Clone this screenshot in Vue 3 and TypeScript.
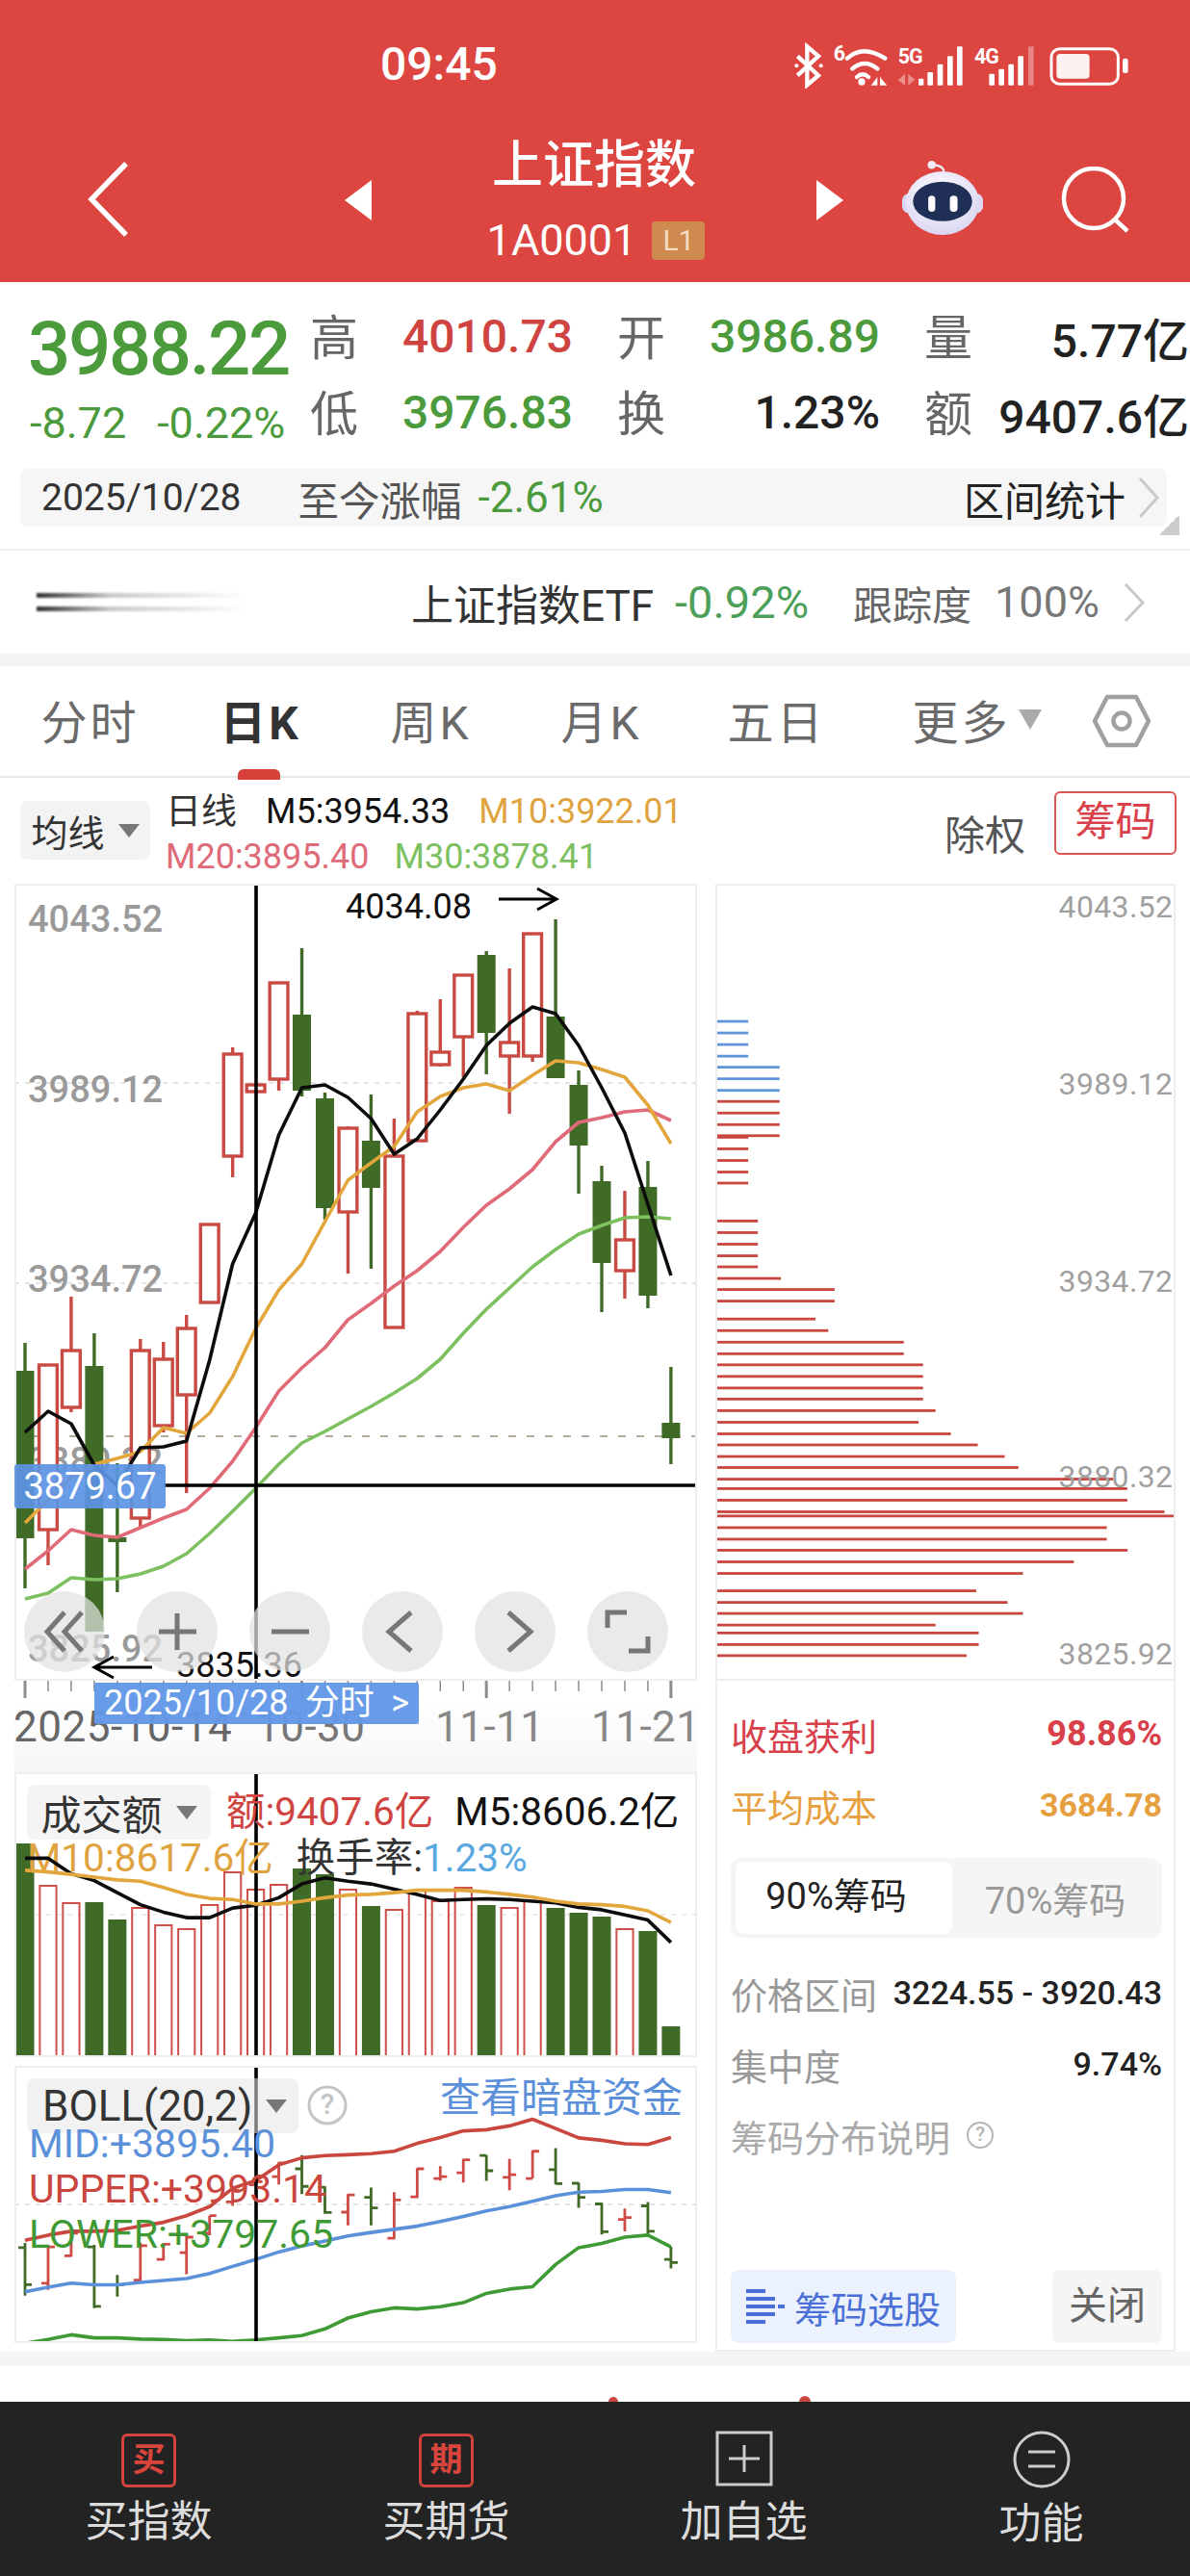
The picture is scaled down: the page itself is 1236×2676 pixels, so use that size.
<script setup lang="ts">
const X = (i: number): number => 26 + i * 23.96;
const z3 = (v: number): number => 1500 + v / 2.8;
const z4 = (v: number): number => 2040 + v / 2.465;
const line = (ys: number[]): string => ys.map((y, i) => `${X(i).toFixed(1)},${y.toFixed(1)}`).join(' ');

type Candle = [string, number, number, number, number];
const rawCandles: Candle[] = [
  ['g', 1395, 1424, 1598, 1650], ['r', 1418, 1418, 1589, 1626], ['r', 1347, 1403, 1462, 1467],
  ['g', 1385, 1419, 1695, 1695], ['g', 1520, 1597, 1602, 1654], ['r', 1391, 1403, 1577, 1587],
  ['r', 1394, 1412, 1481, 1488], ['r', 1366, 1380, 1449, 1551], ['r', 1272, 1272, 1353, 1353],
  ['r', 1088, 1095, 1201, 1223], ['r', 1127, 1127, 1134, 1134], ['r', 1021, 1021, 1121, 1133],
  ['g', 985, 1054, 1133, 1139], ['g', 1135, 1141, 1255, 1267], ['r', 1170, 1172, 1259, 1323],
  ['g', 1137, 1185, 1234, 1318], ['r', 1162, 1201, 1379, 1379], ['r', 1050, 1053, 1185, 1185],
  ['r', 1038, 1093, 1106, 1108], ['r', 1013, 1013, 1077, 1119], ['g', 988, 992, 1073, 1116],
  ['r', 1006, 1083, 1097, 1157], ['r', 969, 970, 1097, 1103], ['g', 955, 1056, 1120, 1120],
  ['g', 1112, 1127, 1190, 1240], ['g', 1211, 1227, 1312, 1363], ['r', 1237, 1288, 1320, 1349],
  ['g', 1206, 1233, 1346, 1359], ['g', 1420, 1478, 1494, 1521],
];
const candles = rawCandles.map((c, i) => ({
  up: c[0] === 'r', x: X(i), wt: c[1], bt: c[2], bb: c[3], wb: c[4],
}));

const m5 = line([1488, 1466, 1479, 1522, 1543, 1504, 1503, 1497, 1413, 1313, 1260, 1179, 1130, 1127, 1140, 1162, 1199, 1183, 1153, 1121, 1086, 1063, 1046, 1053, 1086, 1130, 1177, 1251, 1325]);
const m10 = line([1582, 1558, 1535, 1521, 1515, 1508, 1483, 1489, 1468, 1430, 1380, 1340, 1313, 1269, 1226, 1208, 1191, 1155, 1139, 1130, 1126, 1133, 1117, 1102, 1104, 1111, 1119, 1148, 1188]);
const m20 = line([1630, 1611, 1589, 1595, 1597, 1587, 1577, 1568, 1546, 1518, 1483, 1445, 1421, 1400, 1371, 1354, 1336, 1320, 1300, 1275, 1252, 1235, 1215, 1186, 1166, 1161, 1155, 1153, 1164]);
const m30 = line([1661, 1655, 1639, 1641, 1640, 1635, 1627, 1614, 1593, 1570, 1546, 1521, 1499, 1487, 1474, 1461, 1447, 1432, 1412, 1385, 1360, 1338, 1316, 1298, 1282, 1273, 1265, 1264, 1266]);

const volTops = [1915, 1959, 1977, 1976, 1994, 1982, 2000, 2004, 1979, 1945, 1963, 1958, 1941, 1947, 1963, 1980, 1984, 1964, 1975, 1961, 1979, 1982, 1975, 1982, 1987, 1991, 2004, 2006, 2105];
const volUp = [0, 1, 1, 0, 0, 1, 1, 1, 1, 1, 1, 1, 0, 0, 1, 0, 1, 1, 1, 1, 0, 1, 1, 0, 0, 0, 1, 0, 0];
const vols = volTops.map((t, i) => ({ x: X(i), top: t, up: volUp[i] === 1 }));
const vm5 = line([1205, 1205, 1250, 1270, 1305, 1340, 1362, 1378, 1378, 1350, 1342, 1320, 1280, 1262, 1272, 1280, 1295, 1310, 1328, 1325, 1323, 1325, 1330, 1335, 1348, 1355, 1370, 1385, 1450].map(z3));
const vm10 = line([1240, 1245, 1252, 1260, 1268, 1272, 1290, 1310, 1322, 1325, 1338, 1338, 1330, 1320, 1312, 1310, 1305, 1298, 1298, 1298, 1303, 1310, 1318, 1330, 1338, 1340, 1345, 1358, 1392].map(z3));

const bUpper = line([708, 695, 685, 685, 683, 672, 662, 645, 622, 575, 555, 515, 497, 491, 489, 486, 480, 460, 445, 428, 425, 415, 398, 422, 446, 452, 461, 463, 445].map(z4));
const bMid = line([840, 828, 818, 822, 822, 816, 811, 806, 793, 775, 757, 738, 723, 710, 697, 688, 680, 672, 660, 647, 633, 622, 608, 594, 585, 583, 578, 578, 586].map(z4));
const bLower = line([972, 962, 950, 958, 958, 961, 962, 965, 963, 967, 963, 958, 952, 935, 907, 891, 881, 884, 878, 868, 844, 833, 827, 770, 727, 716, 700, 695, 725].map(z4));

type Ohlc = [number, number, number, number, number];
const rawBars: Ohlc[] = [
  [0, 715, 850, 727, 822], [1, 725, 835, 818, 725], [1, 685, 750, 748, 690], [0, 720, 882, 725, 877],
  [0, 797, 852, 822, 822], [1, 715, 812, 810, 722], [1, 715, 760, 757, 718], [1, 695, 795, 740, 700],
  [1, 645, 695, 690, 645], [1, 578, 620, 610, 580], [1, 556, 568, 566, 558], [1, 508, 565, 545, 510],
  [0, 490, 590, 525, 570], [0, 570, 640, 572, 637], [1, 590, 670, 636, 592], [0, 573, 670, 598, 625],
  [1, 585, 705, 703, 605], [1, 523, 600, 597, 525], [1, 518, 555, 550, 545], [1, 500, 560, 535, 502],
  [0, 490, 556, 491, 530], [1, 500, 580, 547, 540], [1, 478, 550, 550, 480], [0, 472, 565, 527, 563],
  [0, 560, 625, 562, 598], [0, 612, 693, 615, 686], [1, 627, 685, 655, 650], [0, 610, 695, 620, 685],
  [0, 725, 780, 757, 765],
];
const bars = rawBars.map((b, i) => {
  const x = X(i);
  const hi = z4(b[1]), lo = z4(b[2]), op = z4(b[3]), cl = z4(b[4]);
  return {
    up: b[0] === 1,
    d: `M${x} ${hi}V${lo}M${x - 7} ${op}H${x}M${x} ${cl}H${x + 7}`,
  };
});

const chipRaw: [number, number, number][] = [
  [294, 140, 0], [316, 140, 0], [338, 140, 0], [360, 140, 0], [381, 238, 0], [403, 238, 0], [425, 238, 0],
  [446, 238, 1], [468, 238, 1], [490, 238, 1], [511, 238, 1], [514, 140, 1], [536, 140, 1], [558, 140, 1], [580, 140, 1], [601, 140, 1],
  [673, 170, 1], [695, 170, 1], [717, 170, 1], [739, 170, 1], [760, 170, 1], [782, 242, 1], [803, 410, 1], [825, 410, 1],
  [859, 350, 1], [881, 390, 1], [903, 626, 1], [925, 626, 1], [946, 686, 1], [968, 686, 1], [990, 686, 1], [1011, 686, 1],
  [1033, 725, 1], [1055, 672, 1], [1077, 773, 1], [1098, 857, 1], [1120, 941, 1], [1141, 984, 1], [1163, 1280, 1], [1181, 1324, 1],
  [1203, 1324, 1], [1225, 1440, 1], [1233, 1472, 1], [1255, 1260, 1], [1277, 1260, 1], [1298, 1325, 1], [1320, 1157, 1], [1342, 998, 1],
  [1375, 852, 1], [1397, 950, 1], [1418, 998, 1], [1440, 725, 1], [1455, 860, 1], [1477, 860, 1], [1498, 822, 1],
];
const chips = chipRaw.map((c) => ({
  y: 900 + c[0] / 1.823 - 1.3,
  w: 730 + c[1] / 3 - 744,
  up: c[2] === 1,
}));

const tickXs = Array.from({ length: 29 }, (_, i) => ({ x: X(i), long: i === 0 || i === 12 || i === 20 || i === 28 }));
const chipPrices = [
  { t: '4043.52', y: 953 }, { t: '3989.12', y: 1138 }, { t: '3934.72', y: 1343 }, { t: '3880.32', y: 1547 }, { t: '3825.92', y: 1731 },
];
const navItems = [
  'M42 22 24 42l18 20M60 22 42 42l18 20',
  'M42 23v38M23 42h39',
  'M23 42h39',
  'M51 22 28 42l23 20',
  'M35 22l23 20-23 20',
  'M21 38V22H41M43 62H63V47',
];
const tabs = ['周K', '月K', '五日'];
</script>

<template>
  <div class="page">
    <header class="head">
      <div class="status">
        <span class="time">09:45</span>
        <svg class="status-icons" viewBox="60 42 1065 144" width="355" height="48">
          <path d="M85 85l65 60-35 30V55l35 30-65 60" fill="none" stroke="#fff" stroke-width="13" />
          <circle cx="82" cy="115" r="6" fill="#fff" /><circle cx="158" cy="115" r="6" fill="#fff" />
          <text x="197" y="100" class="st-t">6</text>
          <path d="M240 92q48-44 118 0M256 124q38-32 78 0M270 150q18-16 36 0" fill="none" stroke="#fff" stroke-width="13" stroke-linecap="round" />
          <circle cx="285" cy="165" r="11" fill="#fff" />
          <path d="M334 150v26h-20zM342 150v26h22z" fill="#fff" />
          <text x="398" y="108" class="st-t">5G</text>
          <path d="M398 160l22-20v36zM430 140l20 18-20 18z" fill="#fff" opacity=".4" />
          <g fill="#fff">
            <rect x="462" y="155" width="16" height="21" rx="3" /><rect x="490" y="135" width="17" height="41" rx="3" />
            <rect x="521" y="110" width="17" height="66" rx="3" /><rect x="552" y="85" width="17" height="91" rx="3" />
            <rect x="582" y="55" width="17" height="121" rx="3" />
          </g>
          <text x="636" y="108" class="st-t">4G</text>
          <g fill="#fff">
            <rect x="682" y="140" width="17" height="36" rx="3" /><rect x="712" y="125" width="17" height="51" rx="3" />
            <rect x="742" y="110" width="17" height="66" rx="3" /><rect x="772" y="85" width="17" height="91" rx="3" />
            <rect x="804" y="55" width="17" height="121" rx="3" opacity=".35" />
          </g>
          <rect x="876" y="62" width="208" height="110" rx="26" fill="none" stroke="#fff" stroke-width="9" />
          <rect x="892" y="78" width="103" height="77" rx="12" fill="#fff" opacity=".93" />
          <rect x="1098" y="92" width="17" height="46" rx="7" fill="#fff" />
        </svg>
      </div>
      <div class="nav">
        <svg class="back" width="44" height="80" viewBox="0 0 44 80"><path d="M41 3 5 40l36 37" fill="none" stroke="#fff" stroke-width="5.5" /></svg>
        <svg class="tri-l" width="28" height="42" viewBox="0 0 28 42"><path d="M28 0v42L0 21z" fill="#fff" /></svg>
        <div class="title">
          <div class="name">上证指数</div>
          <div class="code">1A0001<span class="lv">L1</span></div>
        </div>
        <svg class="tri-r" width="28" height="42" viewBox="0 0 28 42"><path d="M0 0v42l28-21z" fill="#fff" /></svg>
        <svg class="robot" width="86" height="80" viewBox="405 402 260 240">
          <defs>
            <radialGradient id="rb" cx="45%" cy="35%" r="75%"><stop offset="0" stop-color="#fff" /><stop offset="1" stop-color="#d6d0f0" /></radialGradient>
          </defs>
          <path d="M540 440q-4-18-36-20" fill="none" stroke="#f1edf8" stroke-width="7" />
          <circle cx="501" cy="420" r="13" fill="#f1edf8" />
          <rect x="408" y="510" width="254" height="62" rx="22" fill="#dcd7f2" />
          <ellipse cx="535" cy="540" rx="115" ry="100" fill="url(#rb)" />
          <ellipse cx="535" cy="535" rx="93" ry="62" fill="#1f2f55" />
          <rect x="490" y="517" width="22" height="50" rx="11" fill="#fff" />
          <rect x="558" y="517" width="24" height="50" rx="11" fill="#fff" />
        </svg>
        <svg class="search" width="72" height="70" viewBox="0 0 72 70"><circle cx="34" cy="33" r="31" fill="none" stroke="#fff" stroke-width="4.5" /><path d="M56 55l13 12" stroke="#fff" stroke-width="4.5" /></svg>
      </div>
    </header>

    <section class="quote">
      <div class="price-col">
        <div class="big">3988.22</div>
        <div class="delta"><span>-8.72</span><span>-0.22%</span></div>
      </div>
      <div class="stats">
        <div class="stat"><span class="lb">高</span><span class="v red">4010.73</span></div>
        <div class="stat"><span class="lb">开</span><span class="v green">3986.89</span></div>
        <div class="stat"><span class="lb">量</span><span class="v dark">5.77亿</span></div>
        <div class="stat"><span class="lb">低</span><span class="v green">3976.83</span></div>
        <div class="stat"><span class="lb">换</span><span class="v dark">1.23%</span></div>
        <div class="stat"><span class="lb">额</span><span class="v dark">9407.6亿</span></div>
      </div>
    </section>

    <div class="range">
      <span class="r-date">2025/10/28</span>
      <span class="r-lab">至今涨幅</span>
      <span class="r-val">-2.61%</span>
      <span class="r-stat">区间统计</span>
      <svg width="24" height="46" viewBox="0 0 24 46"><path d="M3 3l18 20L3 43" fill="none" stroke="#c9c9c9" stroke-width="3" /></svg>
      <i class="corner"></i>
    </div>

    <div class="etf">
      <div class="blurred"><i></i><i></i></div>
      <span class="e-name">上证指数ETF</span>
      <span class="e-val">-0.92%</span>
      <span class="e-lab">跟踪度</span>
      <span class="e-num">100%</span>
      <svg width="24" height="44" viewBox="0 0 24 44"><path d="M3 3l18 19L3 41" fill="none" stroke="#c9c9c9" stroke-width="3" /></svg>
    </div>

    <nav class="tabs">
      <span class="tab">分时</span>
      <span class="tab active">日K</span>
      <span v-for="t in tabs" :key="t" class="tab">{{ t }}</span>
      <span class="tab more">更多<i class="big-tri"></i></span>
      <svg class="hex" width="60" height="56" viewBox="0 0 60 56"><path d="M15 3h30l13 25-13 25H15L2 28z" fill="none" stroke="#a0a0a0" stroke-width="4.5" stroke-linejoin="round" /><circle cx="30" cy="28" r="8.5" fill="none" stroke="#a0a0a0" stroke-width="4.5" /></svg>
    </nav>

    <div class="legend">
      <div class="pill ma">均线<i class="tri-down"></i></div>
      <div class="legend-rows">
        <div class="l-row"><span class="l-dark">日线</span><span class="l-blk">M5:3954.33</span><span class="l-org">M10:3922.01</span></div>
        <div class="l-row"><span class="l-pink">M20:3895.40</span><span class="l-grn">M30:3878.41</span></div>
      </div>
      <span class="rights">除权</span>
      <span class="chip-btn">筹码</span>
    </div>

    <div class="charts">
      <div class="left-col">
        <div class="panel main">
          <svg class="fill" viewBox="15 918 709 828">
            <g stroke-width="1.5" stroke-dasharray="5 6" fill="none">
              <path d="M15 1125H724M15 1333H724" stroke="#dcdcdc" />
              <path d="M15 1492H724" stroke="#b5ae9f" stroke-width="2" stroke-dasharray="8 11" />
            </g>
            <text class="y-l" x="29" y="968">4043.52</text>
            <text class="y-l" x="29" y="1145">3989.12</text>
            <text class="y-l" x="29" y="1342">3934.72</text>
            <text class="y-l" x="29" y="1531">3880.32</text>
            <g v-for="(c, i) in candles" :key="i">
              <template v-if="c.up">
                <path :d="`M${c.x} ${c.wt}V${c.bt}M${c.x} ${c.bb}V${c.wb}`" stroke="#c94a42" stroke-width="3.4" />
                <rect :x="c.x - 9.4" :y="c.bt" width="18.8" :height="c.bb - c.bt" fill="#fff" stroke="#c94a42" stroke-width="3.4" />
              </template>
              <template v-else>
                <path :d="`M${c.x} ${c.wt}V${c.wb}`" stroke="#3f6b26" stroke-width="3.4" />
                <rect :x="c.x - 9.5" :y="c.bt" width="19" :height="c.bb - c.bt" fill="#3f6b26" />
              </template>
            </g>
            <polyline :points="m30" class="ln" stroke="#7cc05f" />
            <polyline :points="m20" class="ln" stroke="#e06a78" />
            <polyline :points="m10" class="ln" stroke="#e3a63d" />
            <polyline :points="m5" class="ln" stroke="#0c0c0c" />
            <path d="M266 918V1746M170 1543H724" stroke="#000" stroke-width="3.6" />
            <text class="mark" x="359" y="954">4034.08</text>
            <path d="M518 934H577M558 923l20 11-20 11" fill="none" stroke="#000" stroke-width="3" />
            <text class="y-l" x="29" y="1726">3825.92</text>
            <text class="mark" x="183" y="1742">3835.36</text>
            <path d="M158 1732H99M118 1721l-20 11 20 11" fill="none" stroke="#000" stroke-width="3" />
          </svg>
          <div class="now-tag">3879.67</div>
          <div class="nav-btns">
            <span v-for="(d, i) in navItems" :key="i" class="nav-btn">
              <svg width="84" height="84" viewBox="0 0 84 84"><path :d="d" fill="none" stroke="#777" stroke-width="5" /></svg>
            </span>
          </div>
        </div>

        <div class="axis">
          <svg class="ticks" width="709" height="22" viewBox="15 1748 709 22">
            <path v-for="t in tickXs" :key="t.x" :d="`M${t.x} 1748v${t.long ? 18 : 11}`" stroke="#8d8d8d" :stroke-width="t.long ? 3 : 1.5" />
          </svg>
          <div class="date-labels">
            <span class="d1">2025-10-14</span><span class="d2">10-30</span><span class="d3">11-11</span><span class="d4">11-21</span>
          </div>
          <div class="date-tag"><span>2025/10/28</span><span>分时</span><span>&gt;</span></div>
        </div>

        <div class="panel vol">
          <svg class="fill" viewBox="15 1841 709 296">
            <path d="M15 1989H724" stroke="#e8e8e8" stroke-width="1.5" stroke-dasharray="5 6" />
            <g v-for="(b, i) in vols" :key="i">
              <rect v-if="b.up" :x="b.x - 8.6" :y="b.top" width="17.2" :height="2136 - b.top" fill="none" stroke="#cf4f4a" stroke-width="2" />
              <rect v-else :x="b.x - 9.5" :y="b.top" width="19" :height="2137 - b.top" fill="#3f6b26" />
            </g>
            <path d="M266 1841V2137" stroke="#000" stroke-width="3.6" />
          </svg>
          <div class="pill amount">成交额<i class="tri-down"></i></div>
          <div class="vol-l1"><span class="c-red">额:9407.6亿</span><span class="c-blk">M5:8606.2亿</span></div>
          <div class="vol-l2"><span class="c-org">M10:8617.6亿</span><span class="c-dk">换手率:<em>1.23%</em></span></div>
          <svg class="fill over" viewBox="15 1841 709 296">
            <polyline :points="vm5" class="ln" stroke="#0c0c0c" />
            <polyline :points="vm10" class="ln" stroke="#e3a63d" />
          </svg>
        </div>

        <div class="panel boll">
          <svg class="fill" viewBox="15 2146 709 288">
            <path d="M15 2290H724" stroke="#dcdcdc" stroke-width="1.5" stroke-dasharray="5 6" />
            <path v-for="(b, i) in bars" :key="i" :d="b.d" fill="none" :stroke="b.up ? '#cf4a45' : '#3f6b26'" stroke-width="2.8" />
            <polyline :points="bUpper" class="ln" stroke="#c9473f" />
            <polyline :points="bMid" class="ln" stroke="#5b90da" />
            <polyline :points="bLower" class="ln" stroke="#3f9a35" />
            <path d="M266 2146V2434" stroke="#000" stroke-width="3.6" />
          </svg>
          <div class="pill boll-p">BOLL(20,2)<i class="tri-down"></i></div>
          <svg class="q" width="44" height="44" viewBox="0 0 44 44"><circle cx="22" cy="22" r="19" fill="none" stroke="#c4c4c4" stroke-width="3" /><text x="22" y="31" text-anchor="middle" class="q-t">?</text></svg>
          <span class="dark-pool">查看暗盘资金</span>
          <div class="boll-legend">
            <div class="b-mid">MID:+3895.40</div>
            <div class="b-up">UPPER:+3993.14</div>
            <div class="b-low">LOWER:+3797.65</div>
          </div>
        </div>
      </div>

      <aside class="right-col">
        <div class="chip-chart">
          <svg class="fill" viewBox="743 918 478 828">
            <rect v-for="(c, i) in chips" :key="i" x="744" :y="c.y" :width="c.w" height="2.8" :fill="c.up ? '#c9463f' : '#5f94da'" />
            <text v-for="p in chipPrices" :key="p.t" class="y-r" x="1219" :y="p.y" text-anchor="end">{{ p.t }}</text>
          </svg>
        </div>
        <div class="chip-info">
          <div class="kv c-prof"><span>收盘获利</span><b>98.86%</b></div>
          <div class="kv c-cost"><span>平均成本</span><b>3684.78</b></div>
          <div class="toggle"><span class="on">90%筹码</span><span>70%筹码</span></div>
          <div class="kv g"><span>价格区间</span><b>3224.55 - 3920.43</b></div>
          <div class="kv g"><span>集中度</span><b>9.74%</b></div>
          <div class="kv g2"><span>筹码分布说明</span>
            <svg width="30" height="30" viewBox="0 0 30 30"><circle cx="15" cy="15" r="13" fill="none" stroke="#b5b5b5" stroke-width="2" /><text x="15" y="21" text-anchor="middle" class="q-s">?</text></svg>
          </div>
          <div class="btns">
            <span class="pick">
              <svg width="40" height="38" viewBox="0 0 40 38"><path d="M0 3h20M0 11h30M0 19h30M33 19h7M0 27h30M0 35h20" stroke="#4a70d8" stroke-width="4" /></svg>
              筹码选股
            </span>
            <span class="close">关闭</span>
          </div>
        </div>
      </aside>
    </div>

    <div class="strip"></div>
    <div class="spacer"><i class="dome d-a"></i><i class="dome d-b"></i></div>

    <footer class="foot">
      <div class="f-item"><span class="f-ic red-box">买</span><span class="f-t">买指数</span></div>
      <div class="f-item"><span class="f-ic red-box">期</span><span class="f-t">买期货</span></div>
      <div class="f-item">
        <svg class="f-svg" width="60" height="58" viewBox="0 0 60 58"><rect x="2" y="2" width="56" height="54" fill="none" stroke="#ccc" stroke-width="3" /><path d="M30 15v28M14 29h32" stroke="#ccc" stroke-width="3" /></svg>
        <span class="f-t">加自选</span>
      </div>
      <div class="f-item">
        <svg class="f-svg" width="62" height="60" viewBox="0 0 62 60"><circle cx="31" cy="30" r="28" fill="none" stroke="#ccc" stroke-width="3" /><path d="M17 22h28M17 37h28" stroke="#ccc" stroke-width="3" /></svg>
        <span class="f-t">功能</span>
      </div>
    </footer>
  </div>
</template>

<style>
html, body { margin: 0; background: #fff; }
</style>

<style scoped>
.page { width: 1236px; height: 2676px; display: flex; flex-direction: column; overflow: hidden; background: #fff; color: #333; font-family: Roboto, "Noto Sans CJK SC", sans-serif; }
.head { height: 293px; background: #dd4540; color: #fff; flex: none; }
.status { height: 133px; display: flex; align-items: flex-start; padding: 43px 61px 0 395px; box-sizing: border-box; }
.time { font-size: 48px; line-height: 48px; font-weight: 500; }
.status-icons { margin-left: auto; margin-top: 1px; }
.st-t { font: 700 64px Roboto, sans-serif; fill: #fff; letter-spacing: -3px; }
.nav { display: flex; align-items: flex-start; padding-left: 90px; }
.back { margin-top: 34px; }
.tri-l { margin-left: 224px; margin-top: 54px; }
.tri-r { margin-top: 54px; }
.title { width: 462px; display: flex; flex-direction: column; align-items: center; }
.name { font-size: 53px; line-height: 60px; margin-top: 9px; font-weight: 500; }
.code { font-size: 45px; line-height: 46px; margin-top: 25px; display: flex; align-items: center; margin-left: 4px; }
.lv { width: 55px; height: 40px; margin-left: 16px; border-radius: 4px; background: #cf8a4f; color: #f4dcc4; font-size: 30px; line-height: 40px; text-align: center; }
.robot { margin-left: 60px; margin-top: 32px; }
.search { margin-left: 80px; margin-top: 40px; }

.quote { height: 176px; padding: 17px 0 0 29px; display: flex; box-sizing: border-box; flex: none; }
.price-col { width: 293px; flex: none; }
.big { font-size: 78px; line-height: 78px; font-weight: 500; letter-spacing: -2.4px; color: #4b9a3c; margin-top: 14px; }
.delta { display: flex; gap: 32px; padding-left: 2px; font-size: 45px; line-height: 44px; color: #4b9a3c; margin-top: 16px; }
.stats { display: grid; grid-template-columns: 273px 273px 275px; grid-auto-rows: 79px; column-gap: 46px; }
.stat { display: flex; justify-content: space-between; align-items: center; }
.lb { font-size: 50px; color: #666; margin-bottom: 5px; }
.v { font-size: 48px; font-weight: 500; }
.red { color: #cf4440; }
.green { color: #4b9a3c; }
.dark { color: #222; }

.range { position: relative; margin: 18px 24px 0 21px; height: 60px; border-radius: 8px; background: #f6f6f6; display: flex; align-items: center; padding: 0 7px 0 22px; flex: none; }
.r-date { color: #333; font-size: 39px; }
.r-lab { margin-left: 59px; color: #555; font-size: 42.5px; }
.r-val { margin-left: 17px; color: #4b9a3c; font-size: 44px; }
.r-stat { margin-left: auto; margin-right: 12px; color: #222; font-size: 42px; }
.corner { position: absolute; right: -13px; bottom: -9px; width: 20px; height: 22px; background: linear-gradient(135deg, transparent 50%, #ccc 50%); }

.etf { margin-top: 23px; border-top: 2px solid #eee; height: 109px; box-sizing: border-box; display: flex; align-items: center; padding: 0 46px 0 38px; flex: none; }
.blurred { width: 218px; display: flex; flex-direction: column; gap: 9px; margin-right: 171px; }
.blurred i { display: block; height: 5px; background: linear-gradient(90deg, #333, rgba(120, 120, 120, .4) 35%, transparent); filter: blur(1px); }
.e-name { font-size: 44px; color: #333; }
.e-val { margin-left: 22px; font-size: 47px; color: #4da05a; }
.e-lab { margin-left: 46px; font-size: 41px; color: #666; }
.e-num { margin-left: 24px; font-size: 45px; color: #777; }
.etf svg { margin-left: 24px; }

.tabs { height: 129px; border-top: 13px solid #f5f5f5; border-bottom: 2px solid #e8e8e8; box-sizing: border-box; display: grid; grid-template-columns: repeat(6, 177px) 1fr; padding-left: 5px; align-items: center; flex: none; }
.tab { font-size: 48px; color: #6a6a6a; text-align: center; padding-bottom: 4px; letter-spacing: 3px; }
.tab:nth-child(5) { padding-left: 10px; }
.tab.active { color: #333; font-weight: 700; position: relative; }
.tab.active::after { content: ""; position: absolute; left: 65px; bottom: -24px; width: 44px; height: 11px; border-radius: 6px 6px 0 0; background: #d8403a; }
.more { display: flex; align-items: center; justify-content: center; margin-left: 36px; margin-right: -36px; }
.tri-down { display: inline-block; width: 0; height: 0; border: 11px solid transparent; border-top: 14px solid #777; border-bottom: 0; margin-left: 14px; }
.big-tri { display: inline-block; width: 0; height: 0; border: 12.5px solid transparent; border-top: 21px solid #aaa; border-bottom: 0; margin-left: 8px; }
.hex { justify-self: end; margin-right: 41px; }

.legend { display: flex; align-items: flex-start; height: 110px; flex: none; box-sizing: border-box; }
.pill { border-radius: 8px; background: #f3f3f3; display: flex; align-items: center; justify-content: center; color: #333; box-sizing: border-box; }
.ma { width: 135px; height: 61px; margin: 24px 0 0 21px; font-size: 38px; }
.legend-rows { margin: 12px 0 0 16px; font-size: 36px; line-height: 47px; }
.l-row { display: flex; gap: 30px; }
.l-row:last-child { gap: 26px; }
.l-dark { color: #333; font-size: 37px; }
.l-blk { color: #111; }
.l-org { color: #dfa33f; }
.l-pink { color: #e06a78; }
.l-grn { color: #7cc05f; }
.rights { margin: 26px 30px 0 auto; font-size: 42px; color: #555; }
.chip-btn { width: 127px; height: 66px; margin: 14px 14px 0 0; box-sizing: border-box; border: 2px solid #d55; border-radius: 6px; color: #d8404a; font-size: 42px; line-height: 60px; text-align: center; }

.charts { display: grid; grid-template-columns: 709px 478px; column-gap: 19px; padding-left: 15px; flex: none; height: 1525px; }
.left-col { display: flex; flex-direction: column; }
.panel { position: relative; box-sizing: border-box; flex: none; outline: 2px solid #eee; outline-offset: -2px; }
.fill { display: block; width: 100%; height: 100%; }
.over { position: absolute; inset: 0; pointer-events: none; }
.main { height: 828px; }
.ln { fill: none; stroke-width: 3.6; stroke-linejoin: round; }
.y-l { font: 500 38px Roboto, sans-serif; fill: #9a9a9a; }
.mark { font: 400 36px Roboto, sans-serif; fill: #111; }
.now-tag { position: absolute; left: 0; top: 603px; width: 157px; height: 46px; border-radius: 3px; background: rgba(92, 148, 228, .92); color: #fff; font-size: 38px; line-height: 46px; text-align: center; }
.nav-btns { position: absolute; left: 10px; top: 735px; display: flex; gap: 33px; }
.nav-btn { width: 84px; height: 84px; border-radius: 50%; background: rgba(226, 226, 226, .72); display: block; }
.nav-btn svg { display: block; }

.axis { position: relative; height: 95px; flex: none; background: linear-gradient(180deg, #fff 20%, #f6f6f6 100%); }
.ticks { display: block; }
.date-labels { position: absolute; left: 0; right: 0; top: 24px; font-size: 44px; line-height: 48px; color: #666; letter-spacing: .5px; white-space: nowrap; }
.date-labels span { position: absolute; top: 0; }
.d1 { left: -1px; }
.d2 { left: 251px; color: #777; }
.d3 { left: 437px; color: #888; }
.d4 { left: 599px; color: #888; }
.date-tag { position: absolute; left: 83px; top: 2px; width: 337px; height: 43px; box-sizing: border-box; padding: 0 10px; background: rgba(98, 152, 232, .96); color: #fff; font-size: 36px; line-height: 43px; display: flex; justify-content: space-between; border-radius: 2px; }

.vol { height: 296px; }
.amount { position: absolute; left: 13px; top: 13px; width: 191px; height: 57px; font-size: 42px; background: rgba(243, 243, 243, .9); }
.vol-l1, .vol-l2 { position: absolute; display: flex; font-size: 40.5px; line-height: 44px; }
.vol-l1 { left: 220px; top: 19px; gap: 22px; }
.vol-l2 { left: 13px; top: 67px; gap: 24px; }
.c-red { color: #cf4440; }
.c-blk { color: #111; }
.c-org { color: #dfa33f; }
.c-dk { color: #333; }
.c-dk em { font-style: normal; color: #5aa8e0; }

.boll { height: 288px; margin-top: 9px; }
.boll-p { position: absolute; left: 13px; top: 13px; width: 282px; height: 57px; font-size: 44px; background: rgba(230, 230, 230, .55); justify-content: flex-start; padding-left: 16px; }
.boll-p .tri-down { margin-left: 14px; }
.q { position: absolute; left: 303px; top: 19px; }
.q-t { font: 500 30px Roboto, sans-serif; fill: #c4c4c4; }
.q-s { font: 500 20px Roboto, sans-serif; fill: #b5b5b5; }
.dark-pool { position: absolute; right: 15px; top: 8px; font-size: 42px; line-height: 52px; color: #5b8fd9; }
.boll-legend { position: absolute; left: 15px; top: 58px; font-size: 41px; line-height: 47px; white-space: nowrap; }
.b-mid { color: #5b90da; }
.b-up { color: #c9473f; }
.b-low { color: #3f9a35; }

.right-col { display: flex; flex-direction: column; outline: 2px solid #eee; outline-offset: -2px; height: 1525px; }
.chip-chart { height: 828px; border-bottom: 2px solid #eee; box-sizing: border-box; flex: none; }
.y-r { font: 400 32px Roboto, sans-serif; fill: #a0a0a0; letter-spacing: .4px; }
.chip-info { padding: 32px 14px 0 16px; display: flex; flex-direction: column; flex: 1; box-sizing: border-box; }
.kv { display: flex; justify-content: space-between; align-items: center; font-size: 38px; height: 74px; }
.kv b { font-weight: 500; font-size: 34px; }
.c-prof { color: #d8404a; height: 46px; }
.c-cost { color: #e6a040; height: 46px; margin-top: 28px; }
.c-prof b, .c-cost b { font-size: 36px; font-weight: 700; }
.c-cost b { font-size: 34px; }
.toggle { margin-top: 32px; height: 83px; background: #f5f5f5; border-radius: 12px; display: grid; grid-template-columns: 225px 1fr; padding: 4px 4px 4px 5px; box-sizing: border-box; font-size: 38px; color: #999; align-items: center; text-align: center; }
.toggle .on { height: 100%; background: #fff; border-radius: 8px; color: #222; line-height: 72px; padding-right: 16px; box-sizing: border-box; }
.g { color: #999; }
.g b { color: #222; }
.toggle + .g { margin-top: 20px; }
.g2 { color: #aaa; justify-content: flex-start; gap: 16px; }
.btns { display: flex; justify-content: space-between; margin-top: 103px; }
.pick { width: 234px; height: 76px; border-radius: 8px; background: #ecf2fd; color: #4a70d8; font-size: 38px; display: flex; align-items: center; justify-content: center; gap: 10px; }
.close { width: 114px; height: 76px; border-radius: 8px; background: #f5f5f5; color: #666; font-size: 40px; line-height: 76px; text-align: center; }

.strip { height: 15px; background: #f5f5f5; flex: none; }
.spacer { height: 37px; position: relative; flex: none; }
.dome { position: absolute; bottom: -6px; width: 12px; height: 12px; border-radius: 50%; background: #c9463f; }
.d-a { left: 632px; width: 10px; height: 10px; bottom: -5px; }
.d-b { left: 830px; }
.foot { position: relative; flex: 1; background: #232323; display: grid; grid-template-columns: repeat(4, 1fr); }
.f-item { display: flex; flex-direction: column; align-items: center; }
.f-ic { width: 57px; height: 56px; margin-top: 33px; box-sizing: border-box; border: 3.5px solid #d2433c; border-radius: 6px; color: #d8453d; font-weight: 700; font-size: 34px; line-height: 48px; text-align: center; }
.f-svg { margin-top: 30px; }
.f-t { font-size: 44px; line-height: 50px; color: #dcdcdc; margin-top: 11px; }
.f-svg + .f-t { margin-top: 12px; }
</style>
